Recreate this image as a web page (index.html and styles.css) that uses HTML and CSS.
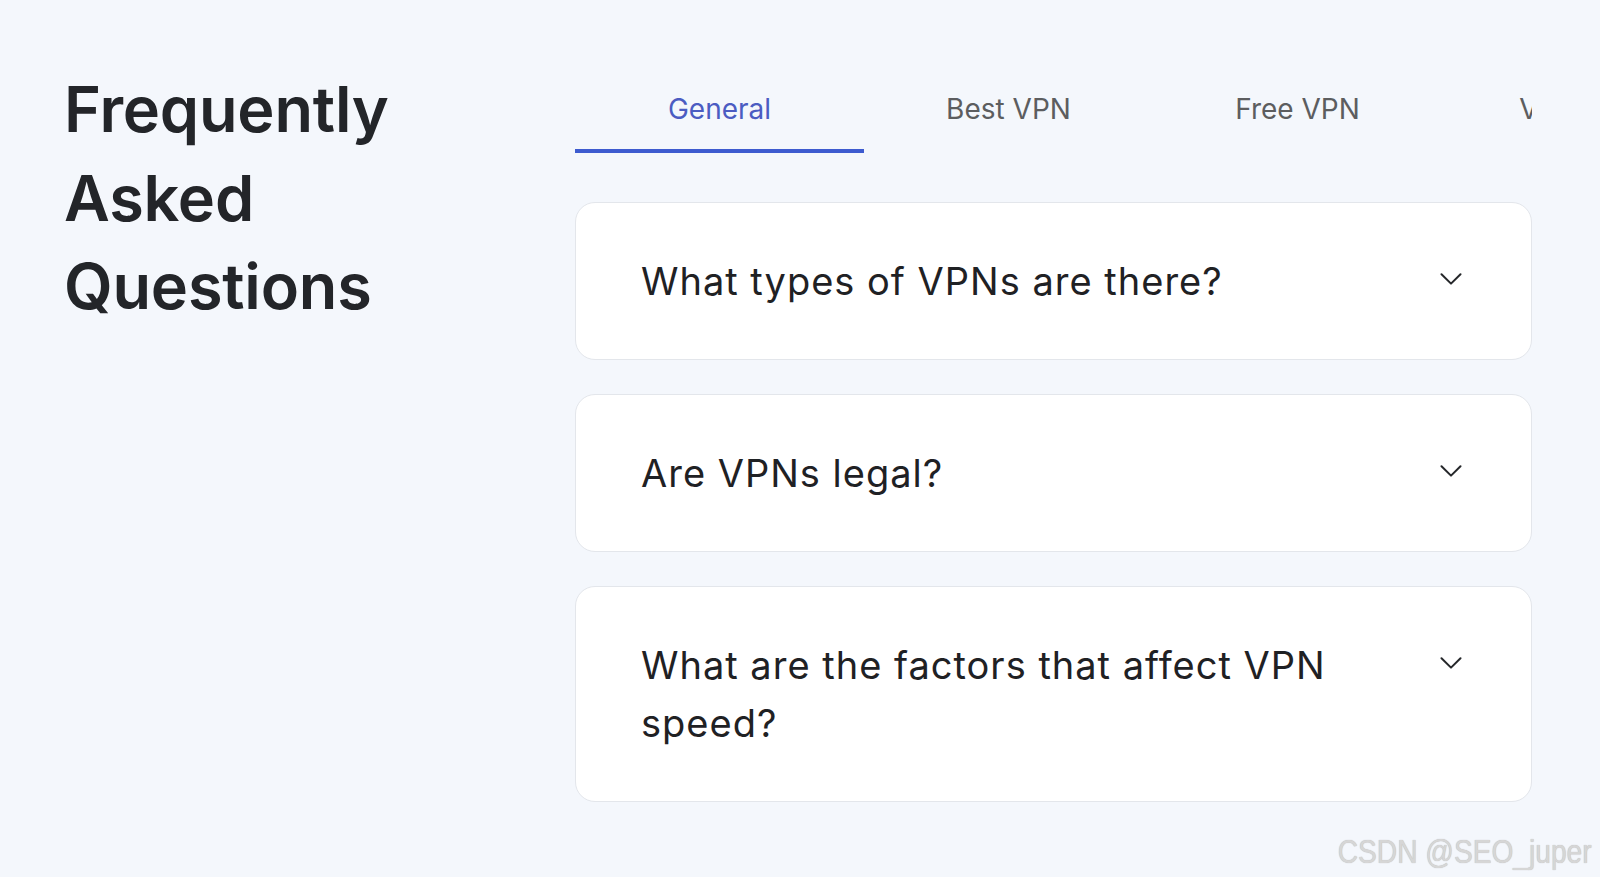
FILE: index.html
```html
<!DOCTYPE html>
<html lang="en">
<head>
<meta charset="utf-8">
<title>FAQ</title>
<link rel="stylesheet" href="styles.css">
</head>
<body>
<div class="page">
  <section class="faq">
    <div class="faq-side">
      <h1 class="faq-title">Frequently Asked Questions</h1>
    </div>
    <div class="faq-main">
      <nav class="tabs">
        <div class="tab tab-active">General</div>
        <div class="tab">Best VPN</div>
        <div class="tab">Free VPN</div>
        <div class="tab">VPN Apps</div>
      </nav>
      <div class="cards">
        <div class="card">
          <div class="question">What types of VPNs are there?</div>
          <svg class="chevron" width="22" height="12" viewBox="0 0 22 12"><path d="M1.5 1.2 L11 10.6 L20.5 1.2" fill="none" stroke="#25272a" stroke-width="2" stroke-linecap="round" stroke-linejoin="round"/></svg>
        </div>
        <div class="card">
          <div class="question">Are VPNs legal?</div>
          <svg class="chevron" width="22" height="12" viewBox="0 0 22 12"><path d="M1.5 1.2 L11 10.6 L20.5 1.2" fill="none" stroke="#25272a" stroke-width="2" stroke-linecap="round" stroke-linejoin="round"/></svg>
        </div>
        <div class="card">
          <div class="question">What are the factors that affect VPN speed?</div>
          <svg class="chevron" width="22" height="12" viewBox="0 0 22 12"><path d="M1.5 1.2 L11 10.6 L20.5 1.2" fill="none" stroke="#25272a" stroke-width="2" stroke-linecap="round" stroke-linejoin="round"/></svg>
        </div>
      </div>
    </div>
  </section>
  <div class="watermark">CSDN @SEO_juper</div>
</div>
</body>
</html>
```
FILE: styles.css
```css
html, body {
  margin: 0;
  padding: 0;
}
body {
  background: #f4f7fc;
  font-family: Inter, "Noto Sans", sans-serif;
  color: #222529;
}
.page {
  position: relative;
  width: 1600px;
  height: 877px;
  overflow: hidden;
}
.faq {
  display: flex;
  padding: 65px 0 0 64px;
}
.faq-side {
  flex: none;
  width: 511px;
}
.faq-title {
  margin: 0;
  width: 360px;
  font-size: 63px;
  font-weight: 600;
  line-height: 88.5px;
  letter-spacing: -0.2px;
  color: #232529;
}
.faq-main {
  flex: none;
  width: 957px;
}
.tabs {
  display: flex;
  overflow: hidden;
}
.tab {
  flex: none;
  width: 289px;
  box-sizing: border-box;
  text-align: center;
  font-size: 28px;
  line-height: 40px;
  padding: 24px 0 20px;
  border-bottom: 4px solid transparent;
  color: #5c5d5f;
  white-space: nowrap;
}
.tab-active {
  color: #4b5cc2;
  border-bottom-color: #3d5bcf;
}
.cards {
  display: flex;
  flex-direction: column;
  gap: 34px;
  margin-top: 49px;
}
.card {
  display: flex;
  align-items: flex-start;
  gap: 32px;
  background: #ffffff;
  border: 1px solid #e3e6eb;
  border-radius: 20px;
  padding: 49px 69px 49px 65px;
}
.question {
  flex: 1;
  font-size: 38px;
  line-height: 58px;
  letter-spacing: 1px;
  color: #1f2124;
}
.chevron {
  flex: none;
  margin-top: 21px;
}
.watermark {
  position: absolute;
  right: 8px;
  top: 835px;
  font-family: "Liberation Sans", Arial, sans-serif;
  font-size: 33px;
  line-height: 33px;
  color: #d6d6d6;
  text-shadow: 0 0 1px #b0b0b0;
  transform: scaleX(0.853);
  transform-origin: right center;
  white-space: nowrap;
}
```
